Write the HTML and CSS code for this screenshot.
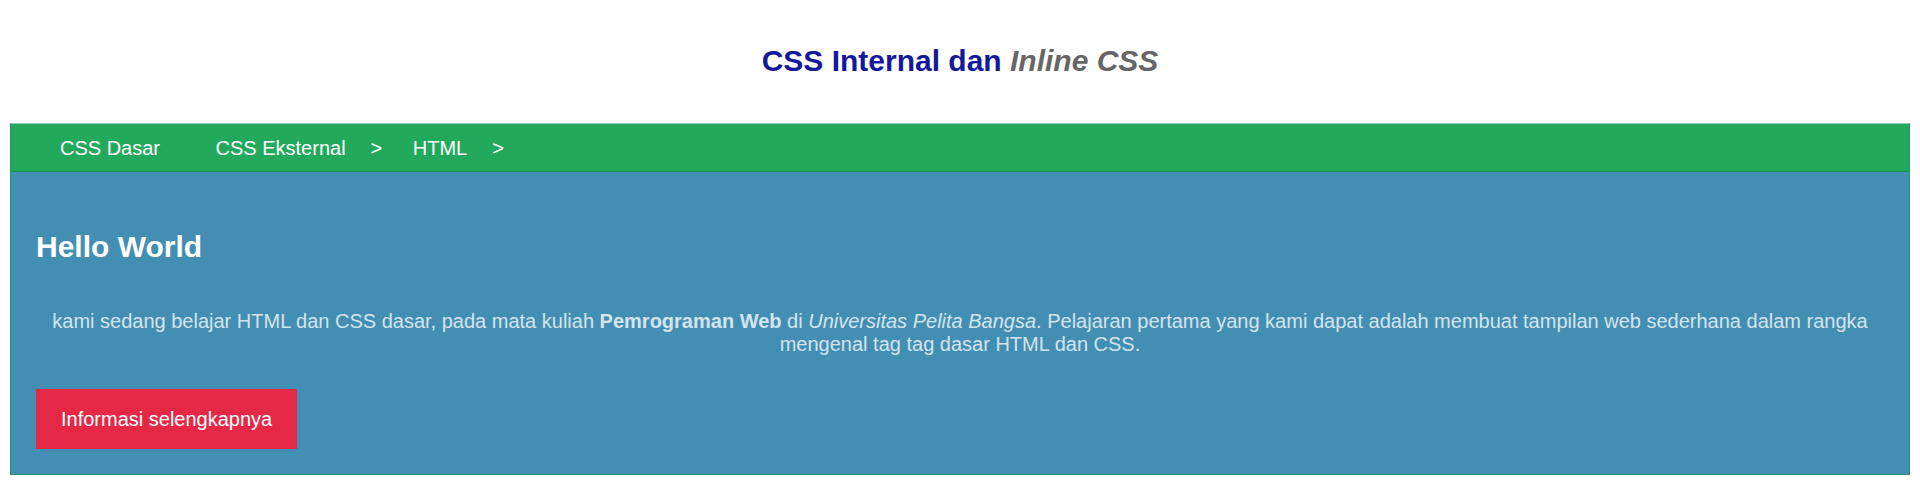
FILE: index.html
```html
<!DOCTYPE html>
<html lang="id">
<head>
<meta charset="utf-8">
<title>CSS Internal dan Inline CSS</title>
<link rel="stylesheet" href="styles.css">
</head>
<body>
  <header class="page-header">
    <h1 class="page-title">CSS Internal dan <em class="title-accent">Inline CSS</em></h1>
  </header>
  <div class="container">
    <nav class="main-nav">
      <ul class="menu">
        <li class="menu-item"><a class="menu-link" href="#">CSS Dasar</a></li>
        <li class="menu-item"><a class="menu-link" href="#">CSS Eksternal</a><span class="caret">&gt;</span></li>
        <li class="menu-item"><a class="menu-link" href="#">HTML</a><span class="caret">&gt;</span></li>
      </ul>
    </nav>
    <section class="hero">
      <h2 class="hero-title">Hello World</h2>
      <p class="hero-text">kami sedang belajar HTML dan CSS dasar, pada mata kuliah <b>Pemrograman Web</b> di <i>Universitas Pelita Bangsa</i>. Pelajaran pertama yang kami dapat adalah membuat tampilan web sederhana dalam rangka mengenal tag tag dasar HTML dan CSS.</p>
      <a class="btn" href="#">Informasi selengkapnya</a>
    </section>
  </div>
</body>
</html>
```
FILE: styles.css
```css
html, body {
  margin: 0;
  padding: 0;
  background: #ffffff;
}

body {
  padding: 0 10px;
  font-family: "Liberation Sans", Arial, sans-serif;
}

.page-header {
  padding: 44px 0 45px;
  text-align: center;
}

.page-title {
  margin: 0;
  font-size: 30px;
  line-height: 34px;
  font-weight: bold;
  color: #13199a;
}

.title-accent {
  font-style: italic;
  color: #666666;
}

.container {
  border: 1px solid #2a8d6c;
  border-top-color: #7fcfbf;
}

.main-nav {
  background: #22a95b;
  border-bottom: 1px solid #1d9256;
}

.menu {
  display: flex;
  gap: 5.5px;
  margin: 0;
  padding: 13px 0 11px 24px;
  list-style: none;
}

.menu-item {
  display: flex;
  font-size: 20px;
  line-height: 23px;
  color: #ffffff;
}

.menu-link {
  padding: 0 25px;
  color: #ffffff;
  text-decoration: none;
}

.caret {
  color: #ffffff;
  font-weight: normal;
}

.hero {
  background: #428fb3;
  padding: 25px 25px 25px;
}

.hero-title {
  margin: 33px 0 0;
  font-size: 30px;
  line-height: 34px;
  font-weight: bold;
  color: #ffffff;
}

.hero-text {
  margin: 46px 0 0;
  font-size: 20px;
  line-height: 23px;
  text-align: center;
  color: #d5e3ec;
}

.btn {
  display: inline-block;
  margin-top: 33px;
  padding: 19px 25px 18px;
  background: #e42845;
  color: #ffffff;
  font-size: 20px;
  line-height: 23px;
  text-decoration: none;
}
```
